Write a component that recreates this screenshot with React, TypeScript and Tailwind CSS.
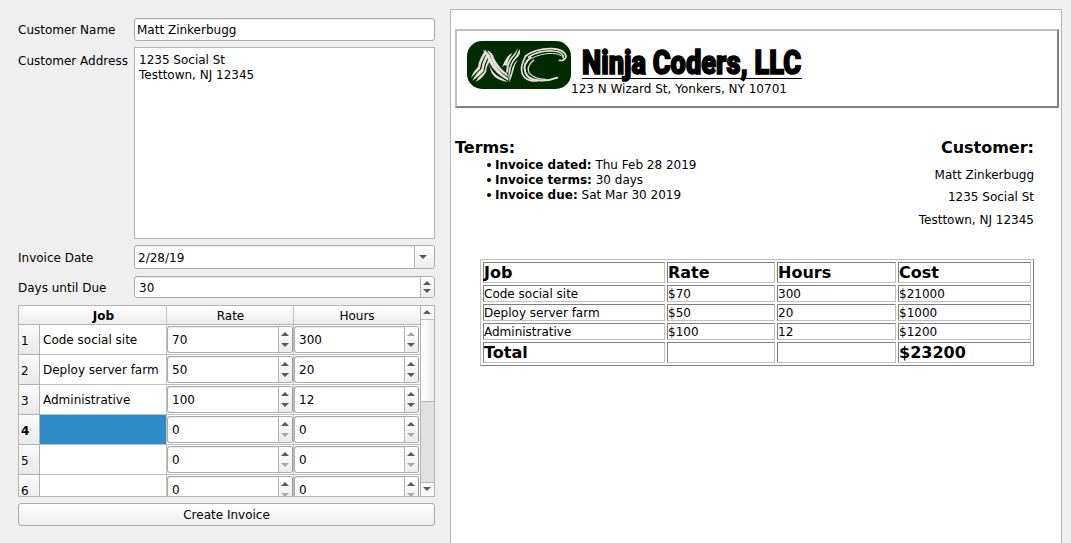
import React from "react";

const panel = "border border-[#b4b4b4] bg-white";
const field = "flex rounded-[3px] border border-[#ababab] bg-white shadow-[inset_0_1px_0_#ececec]";
const raised = "bg-linear-to-b from-white to-[#ececec]";

function Arrow({ up = false, dim = false }: { up?: boolean; dim?: boolean }) {
  return (
    <svg width="8" height="4" viewBox="0 0 8 4" className="block shrink-0">
      <path d={up ? "M0 4L4 0L8 4Z" : "M0 0L4 4L8 0Z"} fill={dim ? "#a8a8a8" : "#5a5a5a"} />
    </svg>
  );
}

function SpinButtons({ upDim = false, downDim = false, tight = false }: { upDim?: boolean; downDim?: boolean; tight?: boolean }) {
  return (
    <div className={`flex w-[14px] shrink-0 flex-col items-center justify-between rounded-r-[2px] border-l border-[#b4b4b4] pr-[1px] ${tight ? "py-[4px]" : "py-[5px]"} ${raised}`}>
      <Arrow up dim={upDim} />
      <Arrow dim={downDim} />
    </div>
  );
}

function CellSpin({ value, upDim, last }: { value: number; upDim?: boolean; last?: boolean }) {
  return (
    <div className={`flex h-[30px] shrink-0 border-b border-[#c0c0c0] py-[1px] ${last ? "w-[126px] pr-[1px]" : "w-[127px] border-r"}`}>
      <div className={`${field} min-w-0 flex-1 border-r-[#999]`}>
        <span className="flex-1 pt-[6px] pl-[4px]">{value}</span>
        <SpinButtons upDim={upDim} downDim={value === 0} />
      </div>
    </div>
  );
}

const jobs = [
  { job: "Code social site", rate: 70, hours: 300 },
  { job: "Deploy server farm", rate: 50, hours: 20 },
  { job: "Administrative", rate: 100, hours: 12 },
  { job: "", rate: 0, hours: 0 },
  { job: "", rate: 0, hours: 0 },
  { job: "", rate: 0, hours: 0 },
];

function JobTable() {
  return (
    <div className={`${panel} mt-[7px] flex h-[192px] overflow-hidden`}>
      <div className="flex w-[401px] shrink-0 flex-col">
        <div className={`flex h-[19px] shrink-0 border-b border-[#b4b4b4] text-center ${raised}`}>
          <div className="w-[148px] border-r border-[#c4c4c4] pt-[3px] pl-[22px] font-bold">Job</div>
          <div className="w-[127px] border-r border-[#c4c4c4] pt-[3px] pl-[1px]">Rate</div>
          <div className="w-[126px] pt-[3px]">Hours</div>
        </div>
        {jobs.map((r, i) => (
          <div key={i} className="flex h-[30px] shrink-0">
            <div className={`w-[21px] border-r border-b border-[#b0b0b0] bg-linear-to-b from-[#fbfbfb] to-[#e9e9e9] pt-[9px] pl-[2px] ${i === 3 ? "font-bold" : ""}`}>{i + 1}</div>
            <div className={`w-[127px] border-r border-b border-[#c0c0c0] pt-[8px] pl-[3px] whitespace-nowrap ${i === 3 ? "bg-[#308cc6]" : ""}`}>{r.job}</div>
            <CellSpin value={r.rate} />
            <CellSpin value={r.hours} upDim={i === 0} last />
          </div>
        ))}
      </div>
      <div className="flex w-[14px] shrink-0 flex-col border-l border-[#b4b4b4] bg-[#e1e1e1]">
        <div className="flex h-[14px] items-center justify-center border-b border-[#c0c0c0] bg-[#fafafa] pr-[1px] pb-[1px]"><Arrow up /></div>
        <div className="h-[82px] border-b border-[#b4b4b4] bg-linear-to-r from-white to-[#ededed]" />
        <div className="flex-1" />
        <div className="flex h-[14px] items-center justify-center border-t border-[#b4b4b4] bg-[#fafafa] pr-[1px] pb-[1px]"><Arrow /></div>
      </div>
    </div>
  );
}

function Logo() {
  return (
    <svg viewBox="66 123 312 144" className="h-[48px] w-[104px] shrink-0">
      <rect x="66" y="123" width="312" height="144" rx="45" fill="#002b00" />
      <g fill="#e2e0d8">
        <path d="M121 150Q100 181 99 201Q84 215 78 234Q94 217 105 207Q108 182 126 158Z" />
        <path d="M127 158Q111 186 109 207Q91 222 82 242Q97 234 116 214Q116 194 131 169Z" />
        <path d="M130 176Q121 194 118 215Q101 229 91 246Q111 237 124 215Q124 198 134 186Z" />
        <path d="M113 150Q131 154 137 172Q153 211 190 235L190 242Q150 222 134 190Q123 162 113 150Z" />
        <path d="M126 151Q143 157 148 176Q164 205 187 222L188 230Q154 210 142 183Q136 163 126 151Z" />
        <path d="M129 189Q143 221 163 231L190 246Q155 243 140 220Z" />
        <path d="M218 143Q218 157 206 170Q189 190 190 213L184 223Q181 194 199 171Q214 155 218 143Z" />
        <path d="M224 147Q229 164 212 177Q197 194 196 218L190 236Q188 205 202 182Q216 166 224 147Z" />
        <path d="M220 176Q207 195 204 216Q200 232 193 247L193 231Q200 218 202 203Q208 187 220 176Z" />
        <path d="M179 184Q187 165 203 158Q188 178 186 197Q178 193 170 203Q176 192 179 184Z" />
      </g>
      <g fill="none" stroke="#e2e0d8" strokeLinecap="round">
        <path d="M242 168Q272 145 320 146Q360 148 363 170Q358 184 343 181" strokeWidth="5" />
        <path d="M251 171Q282 151 323 153Q355 155 355 173" strokeWidth="5" />
        <path d="M260 175Q287 160 322 160Q343 161 348 167" strokeWidth="3" />
        <path d="M242 168Q219 211 239 232Q251 244 276 243" strokeWidth="5" />
        <path d="M257 173Q232 191 241 217Q248 238 280 241Q309 244 337 233" strokeWidth="6" />
        <path d="M266 180Q242 201 253 220Q269 237 301 238" strokeWidth="4" />
      </g>
    </svg>
  );
}

const columns = ["w-[182px]", "w-[108px]", "w-[119px]", "w-[133px]"];
const invoiceRows = [
  ["Job", "Rate", "Hours", "Cost"],
  ["Code social site", "$70", "300", "$21000"],
  ["Deploy server farm", "$50", "20", "$1000"],
  ["Administrative", "$100", "12", "$1200"],
  ["Total", "", "", "$23200"],
];

function Invoice() {
  return (
    <div className={`${panel} mt-[9px] ml-[15px] h-[560px] w-[612px] shrink-0`}>
      <div className="mt-[19px] ml-[4px] flex h-[79px] w-[604px] border-2 border-t-[#c0c0c0] border-r-[#808080] border-b-[#808080] border-l-[#c0c0c0] pt-[10px] pl-[10px]">
        <Logo />
        <div className="min-w-0 flex-1">
          <div className="ml-[11px] h-[38px] w-[220px] border-b border-black pt-[2px]">
            <h1 className="w-max origin-left scale-x-[0.802] font-['Roboto',sans-serif] text-[34px] leading-[38px] font-black whitespace-nowrap [-webkit-text-stroke:1.6px_black]">Ninja Coders, LLC</h1>
          </div>
          <p className="mt-[3px]">123 N Wizard St, Yonkers, NY 10701</p>
        </div>
      </div>
      <div className="mt-[30px] flex justify-between pr-[27px] pl-[4px]">
        <div>
          <h2 className="text-[16px] leading-[20px] font-bold">Terms:</h2>
          <ul className="pl-[31px]">
            {[["Invoice dated:", "Thu Feb 28 2019"], ["Invoice terms:", "30 days"], ["Invoice due:", "Sat Mar 30 2019"]].map(([k, v]) => (
              <li key={k} className="flex items-center">
                <span className="mr-[4px] mb-[2px] ml-[1px] size-[4px] rounded-full bg-black" />
                <span><b>{k}</b> {v}</span>
              </li>
            ))}
          </ul>
        </div>
        <div className="text-right">
          <h2 className="text-[16px] leading-[20px] font-bold">Customer:</h2>
          <p className="mt-[10px]">Matt Zinkerbugg</p>
          <p className="mt-[7px]">1235 Social St</p>
          <p className="mt-[8px]">Testtown, NJ 12345</p>
        </div>
      </div>
      <div className="mt-[31px] ml-[29px] flex h-[107px] w-[554px] flex-col gap-[2px] border border-t-[#c0c0c0] border-r-[#808080] border-b-[#808080] border-l-[#c0c0c0] p-[2px]">
        {invoiceRows.map((row, i) => (
          <div key={i} className={`flex gap-[2px] ${i % 4 === 0 ? "h-[21px] text-[16px] leading-[19px] font-bold" : "h-[17px] leading-[17px]"}`}>
            {row.map((text, j) => (
              <div key={j} className={`${columns[j]} border border-t-[#808080] border-r-[#c0c0c0] border-b-[#c0c0c0] border-l-[#808080]`}>{text}</div>
            ))}
          </div>
        ))}
      </div>
    </div>
  );
}

export default function App() {
  return (
    <main className="flex h-[543px] w-[1071px] overflow-hidden bg-[#efefef] font-['DejaVu_Sans',sans-serif] text-[12px] leading-[15px] text-black">
      <section className="ml-[18px] flex w-[417px] shrink-0 flex-col pt-[18px]">
        <div className="flex h-[23px]">
          <label className="w-[116px] shrink-0 pt-[5px]">Customer Name</label>
          <div className={`${field} flex-1 pt-[4px] pl-[2px]`}>Matt Zinkerbugg</div>
        </div>
        <div className="mt-[6px] flex h-[192px]">
          <label className="w-[116px] shrink-0 pt-[7px]">Customer Address</label>
          <div className={`${panel} flex-1 pt-[5px] pl-[4px]`}>1235 Social St<br />Testtown, NJ 12345</div>
        </div>
        <div className="mt-[6px] flex h-[24px]">
          <label className="w-[116px] shrink-0 pt-[6px]">Invoice Date</label>
          <div className={`${field} flex-1`}>
            <span className="flex-1 pt-[5px] pl-[3px]">2/28/19</span>
            <div className={`flex w-[20px] items-center justify-center rounded-r-[2px] border-l border-[#b4b4b4] pr-[3px] ${raised}`}><Arrow /></div>
          </div>
        </div>
        <div className="mt-[7px] flex h-[22px]">
          <label className="w-[116px] shrink-0 pt-[5px]">Days until Due</label>
          <div className={`${field} flex-1`}>
            <span className="flex-1 pt-[4px] pl-[4px]">30</span>
            <SpinButtons tight />
          </div>
        </div>
        <JobTable />
        <button className={`mt-[6px] h-[23px] rounded-[3px] border border-[#ababab] pt-[1px] text-center ${raised}`}>Create Invoice</button>
      </section>
      <Invoice />
    </main>
  );
}
